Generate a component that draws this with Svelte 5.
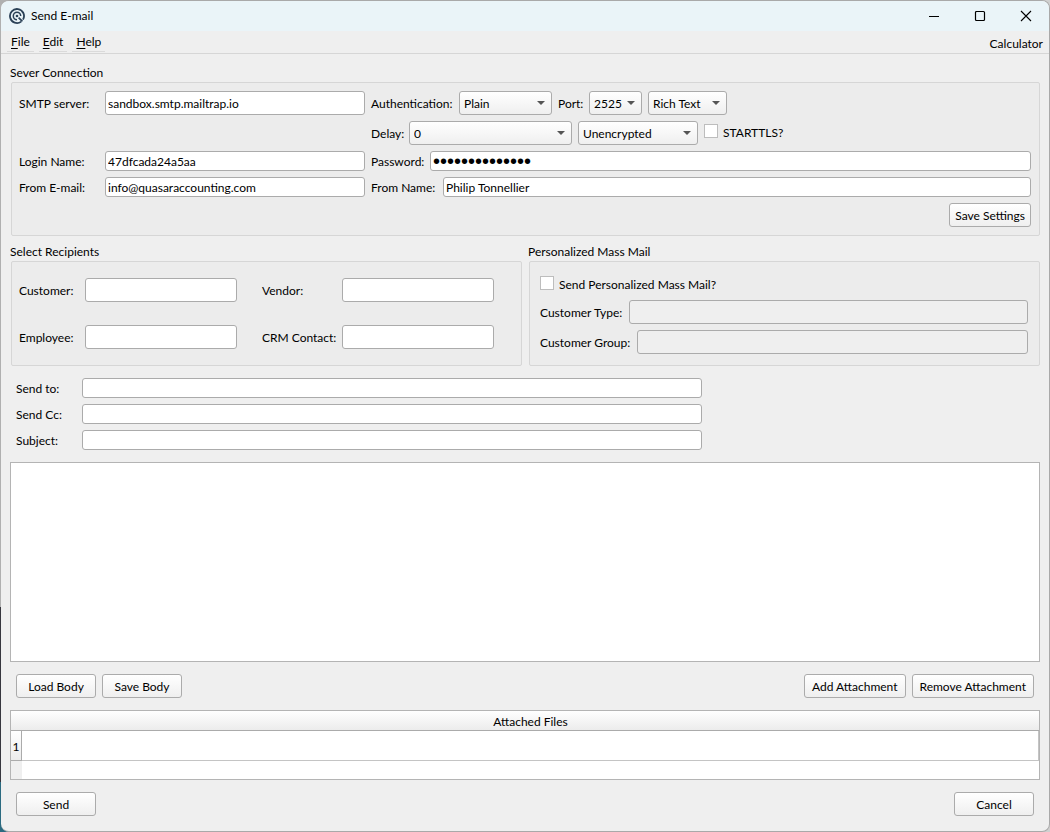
<script lang="ts">
    let smtp = $state('sandbox.smtp.mailtrap.io')
    let login = $state('47dfcada24a5aa')
    let password = $state('quasar-sandbox')
    let fromEmail = $state('info@quasaraccounting.com')
    let fromName = $state('Philip Tonnellier')
    let starttls = $state(false)
    let massMail = $state(false)
    let body = $state('')

    const menus = ['File', 'Edit', 'Help']
    const recipients = ['Customer', 'Vendor', 'Employee', 'CRM Contact']
    const headers = ['Send to', 'Send Cc', 'Subject']
    const massFilters = ['Customer Type', 'Customer Group']
    const attachments = ['']

    const toId = (name: string) => name.toLowerCase().replace(' ', '-')
</script>

{#snippet combo(id: string, options: string[], label: string)}
    <span class="combo {id}">
        <select {id} aria-label={label}>
            {#each options as opt}
                <option>{opt}</option>
            {/each}
        </select>
    </span>
{/snippet}

<div class="window">
    <header class="titlebar">
        <svg class="logo" width="16" height="16" viewBox="0 0 16 16" fill="none" stroke="#2b4157">
            <path d="M12.2 13.6A7 7 0 1 1 14 11.6" stroke-width="1.8" />
            <path d="M8 11.7A3.7 3.7 0 1 1 11.7 8" stroke-width="1.5" />
            <circle cx="8" cy="8" r="1.3" fill="#2b4157" stroke="none" />
            <path d="M9.6 9.6L13.4 13.4" stroke-width="1.7" />
        </svg>
        <h1>Send E-mail</h1>
        <button class="win-btn" aria-label="Minimize">
            <svg width="12" height="12" viewBox="0 0 12 12"><path d="M1 6.5H11" stroke="#000" /></svg>
        </button>
        <button class="win-btn" aria-label="Maximize">
            <svg width="12" height="12" viewBox="0 0 12 12">
                <rect x="1.5" y="1.5" width="9" height="9" rx="1" fill="none" stroke="#000" stroke-width="1.2" />
            </svg>
        </button>
        <button class="win-btn" aria-label="Close">
            <svg width="12" height="12" viewBox="0 0 12 12"><path d="M1 1L11 11M11 1L1 11" stroke="#000" stroke-width="1.1" /></svg>
        </button>
    </header>

    <nav class="menubar">
        {#each menus as menu}
            <button class="menu"><u>{menu[0]}</u>{menu.slice(1)}</button>
        {/each}
        <button class="calculator">Calculator</button>
    </nav>

    <main>
        <section>
            <h2>Sever Connection</h2>
            <div class="frame connection">
                <label for="smtp">SMTP server:</label>
                <input id="smtp" class="tall" type="text" bind:value={smtp} />
                <div class="line">
                    <label class="w-auth" for="auth">Authentication:</label>
                    {@render combo('auth', ['Plain', 'Login'], 'Authentication')}
                    <label class="w-port" for="port">Port:</label>
                    {@render combo('port', ['2525', '587', '465', '25'], 'Port')}
                    {@render combo('format', ['Rich Text', 'Plain Text'], 'Format')}
                </div>

                <div class="line delay-line">
                    <label class="w-delay" for="delay">Delay:</label>
                    {@render combo('delay', ['0', '1', '5', '10'], 'Delay')}
                    {@render combo('encryption', ['Unencrypted', 'SSL', 'TLS'], 'Encryption')}
                    <label class="check">
                        <input type="checkbox" bind:checked={starttls} />
                        STARTTLS?
                    </label>
                </div>

                <label for="login">Login Name:</label>
                <input id="login" type="text" bind:value={login} />
                <div class="line">
                    <label class="w-password" for="password">Password:</label>
                    <input id="password" class="grow" type="password" bind:value={password} />
                </div>

                <label for="from-email">From E-mail:</label>
                <input id="from-email" type="text" bind:value={fromEmail} />
                <div class="line">
                    <label class="w-name" for="from-name">From Name:</label>
                    <input id="from-name" class="grow" type="text" bind:value={fromName} />
                </div>

                <button class="push save">Save Settings</button>
            </div>
        </section>

        <div class="columns">
            <section>
                <h2>Select Recipients</h2>
                <div class="frame recipients">
                    {#each recipients as name}
                        <label for={toId(name)}>{name}:</label>
                        <input id={toId(name)} class="tall" type="text" />
                    {/each}
                </div>
            </section>
            <section>
                <h2>Personalized Mass Mail</h2>
                <div class="frame mass">
                    <label class="check">
                        <input type="checkbox" bind:checked={massMail} />
                        Send Personalized Mass Mail?
                    </label>
                    {#each massFilters as name}
                        <div class="line">
                            <label class="w-{toId(name)}" for={toId(name)}>{name}:</label>
                            <input id={toId(name)} class="tall grow" type="text" disabled={!massMail} />
                        </div>
                    {/each}
                </div>
            </section>
        </div>

        <div class="headers">
            {#each headers as name}
                <label for={toId(name)}>{name}:</label>
                <input id={toId(name)} type="text" />
            {/each}
        </div>

        <textarea aria-label="Message body" bind:value={body}></textarea>

        <div class="line actions">
            <button class="push">Load Body</button>
            <button class="push">Save Body</button>
            <button class="push right">Add Attachment</button>
            <button class="push">Remove Attachment</button>
        </div>

        <div class="files">
            <table>
                <thead>
                    <tr>
                        <th class="corner"></th>
                        <th scope="col">Attached Files</th>
                    </tr>
                </thead>
                <tbody>
                    {#each attachments as file, i}
                        <tr>
                            <th class="row-no" scope="row">{i + 1}</th>
                            <td>{file}</td>
                        </tr>
                    {/each}
                </tbody>
            </table>
            <div class="gutter"></div>
        </div>

        <div class="line actions">
            <button class="push">Send</button>
            <button class="push right">Cancel</button>
        </div>
    </main>
</div>

<style>
    :global(body) {
        margin: 0;
        background: linear-gradient(#b0b0b0 73%, #36363e 73% 94%, #2b6a80 94%) no-repeat left / 20px 100% #d0d0d0;
    }

    .window {
        box-sizing: border-box;
        min-height: 100vh;
        display: flex;
        flex-direction: column;
        margin-left: 1px;
        background: #efefef;
        border: 1px solid #a9a9a9;
        border-left: 0;
        border-radius: 8px;
        overflow: hidden;
        font-family: Lato, 'Open Sans', sans-serif;
        font-size: 12px;
        line-height: 16px;
        color: #000;
    }

    input,
    select,
    textarea,
    button {
        box-sizing: border-box;
        margin: 0;
        font: inherit;
        color: inherit;
    }

    h1,
    h2 {
        margin: 0;
        font-size: 12px;
        font-weight: 400;
    }

    label {
        padding-top: 2px;
        white-space: nowrap;
    }

    .titlebar {
        display: flex;
        align-items: center;
        height: 30px;
        padding-left: 8px;
        background: #eaf4f8;
    }

    .titlebar h1 {
        flex: 1;
        padding-left: 6px;
    }

    .win-btn {
        display: grid;
        place-items: center;
        width: 46px;
        height: 30px;
        padding: 0;
        border: 0;
        background: none;
    }

    .menubar {
        display: flex;
        align-items: flex-start;
        gap: 5px;
        height: 22px;
        padding: 0 6px;
        border-bottom: 1px solid #d6d6d6;
    }

    .menu,
    .calculator {
        height: 21px;
        padding: 1px 4px 0;
        border: 0;
        border-bottom: 1px solid #dadada;
        background: none;
    }

    .menu u {
        text-underline-offset: 2px;
    }

    .calculator {
        height: 22px;
        margin-left: auto;
        padding: 3px 0 0;
        border: 0;
    }

    main {
        flex: 1;
        display: flex;
        flex-direction: column;
        padding: 11px 9px 15px;
    }

    h2 {
        margin-bottom: 1px;
    }

    .frame {
        margin-left: 1px;
        border: 1px solid #d6d6d6;
        border-radius: 2px;
        background: #ececec;
    }

    .line {
        display: flex;
        align-items: center;
        gap: 6px;
    }

    .grow {
        flex: 1;
        min-width: 0;
    }

    .connection {
        display: grid;
        grid-template-columns: 80px 260px 1fr;
        gap: 6px;
        align-items: center;
        padding: 8px 8px 8px 7px;
    }

    .delay-line {
        grid-column: 3;
    }

    .save {
        grid-column: 3;
        justify-self: end;
    }

    .w-auth {
        width: 82px;
    }

    .w-port {
        width: 25px;
    }

    .w-delay {
        width: 32px;
    }

    .w-password {
        width: 53px;
    }

    .w-name {
        width: 66px;
    }

    .w-customer-type {
        width: 83px;
    }

    .w-customer-group {
        width: 91px;
    }

    input[type='text'],
    input[type='password'] {
        height: 20px;
        padding: 0 2px;
        border: 1px solid #ababab;
        border-radius: 3px;
        background: #fff;
    }

    input[type='password'] {
        font-family: 'Liberation Sans', sans-serif;
        font-size: 20px;
    }

    input[type='text'].tall {
        height: 24px;
    }

    input[type='text']:disabled {
        background: #efefef;
    }

    .combo {
        position: relative;
        display: flex;
    }

    .combo::after {
        content: '';
        position: absolute;
        right: 7px;
        top: 10px;
        border: 4px solid transparent;
        border-top-color: #555;
        border-bottom: 0;
        pointer-events: none;
    }

    .combo select {
        appearance: none;
        width: 100%;
        height: 24px;
        padding: 1px 16px 0 4px;
        border: 1px solid #ababab;
        border-radius: 3px;
        background: linear-gradient(#fff, #efefef);
    }

    .auth {
        width: 93px;
    }

    .port {
        width: 53px;
    }

    .format {
        width: 79px;
    }

    .delay {
        width: 163px;
    }

    .encryption {
        width: 120px;
    }

    .check {
        display: flex;
        align-items: flex-start;
        gap: 5px;
        padding: 0;
        line-height: 18px;
    }

    .check input {
        appearance: none;
        width: 14px;
        height: 14px;
        border: 1px solid #bdbdbd;
        background: #fff;
    }

    .check input:checked {
        background: #555;
        box-shadow: inset 0 0 0 2px #fff;
    }

    .push {
        min-width: 80px;
        height: 24px;
        padding: 1px 7px 0;
        border: 1px solid #ababab;
        border-radius: 3px;
        background: linear-gradient(#fff, #efefef);
        white-space: nowrap;
    }

    .save {
        padding: 1px 5px 0;
    }

    .right {
        margin-left: auto;
    }

    .columns {
        display: grid;
        grid-template-columns: 1fr 1fr;
        gap: 6px;
        margin-top: 8px;
    }

    .recipients {
        box-sizing: border-box;
        height: 105px;
        display: grid;
        grid-template-columns: 66px 152px 105px 152px;
        align-items: center;
        align-content: center;
        row-gap: 23px;
        padding-left: 7px;
    }

    .recipients label:nth-of-type(even) {
        padding-left: 25px;
    }

    .mass {
        box-sizing: border-box;
        height: 105px;
        display: flex;
        flex-direction: column;
        justify-content: center;
        gap: 6px;
        padding: 2px 11px 0 10px;
    }

    .headers {
        display: grid;
        grid-template-columns: 66px minmax(0, 620px);
        row-gap: 6px;
        align-items: center;
        padding: 12px 6px;
    }

    textarea {
        flex: 1;
        min-height: 120px;
        border: 1px solid #b4b4b4;
        background: #fff;
        resize: none;
        outline: none;
    }

    .actions {
        padding: 12px 6px;
    }

    .actions:last-child {
        padding-bottom: 0;
    }

    .files {
        border: 1px solid #b4b4b4;
        background: #fff;
    }

    table {
        width: 100%;
        border-collapse: separate;
        border-spacing: 0;
    }

    th {
        box-sizing: border-box;
        height: 20px;
        padding: 2px 0 0;
        border-bottom: 1px solid #ababab;
        background: linear-gradient(#fff, #ececec);
        font-weight: 400;
        text-align: center;
    }

    .corner,
    .row-no {
        width: 11px;
    }

    .row-no {
        height: 30px;
        border-right: 1px solid #ababab;
    }

    td {
        padding: 0;
        border-right: 1px solid #c4c4c4;
        border-bottom: 1px solid #c4c4c4;
    }

    .gutter {
        width: 11px;
        height: 18px;
        background: #efefef;
    }
</style>
